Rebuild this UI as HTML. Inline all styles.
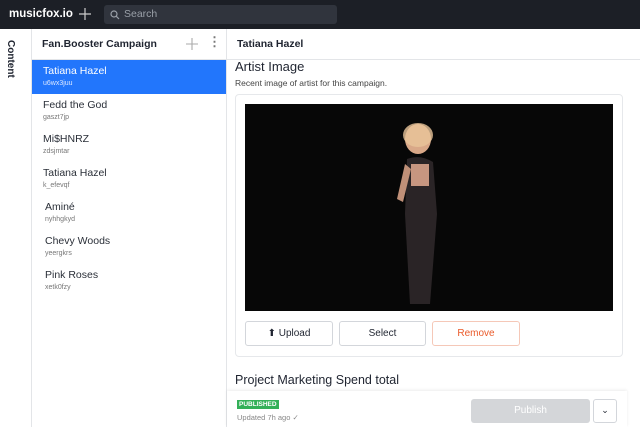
<!DOCTYPE html><html><head><style>
*{box-sizing:border-box;margin:0;padding:0}
body{width:640px;height:427px;overflow:hidden;font-family:"Liberation Sans",sans-serif;background:#fff;position:relative;color:#1f2430}
.top{position:absolute;left:0;top:0;width:640px;height:29px;background:#1c1f26}
.logo{position:absolute;left:9px;top:8px;color:#fff;font-size:11.5px;font-weight:bold}
.search{position:absolute;left:104px;top:5px;width:233px;height:19px;background:#30343d;border-radius:3px;color:#9aa0a8;font-size:10.5px;padding:3px 0 0 20px}
.side{position:absolute;left:0;top:29px;width:32px;height:398px;border-right:1px solid #e3e5e8;background:#fff}
.side span{position:absolute;left:5px;top:11px;writing-mode:vertical-rl;font-size:10px;font-weight:bold}
.list{position:absolute;left:32px;top:29px;width:195px;height:398px;border-right:1px solid #e3e5e8}
.lh{height:31px;border-bottom:1px solid #e3e5e8;font-size:10.5px;font-weight:bold;padding:9px 0 0 10px;position:relative}
.it{height:34px;padding:5px 0 0 11px;font-size:10.5px;color:#2a2f38}
.it small{display:block;font-size:7px;color:#777;margin-top:3px}
.it.sel{background:#2276fc;color:#fff}.it.sel small{color:#dbe7ff}
.main{position:absolute;left:227px;top:29px;width:413px;height:398px}
.mh{height:31px;border-bottom:1px solid #e3e5e8;font-size:10.5px;font-weight:bold;padding:9px 0 0 10px}
.btn{position:absolute;top:321px;height:25px;border:1px solid #d3d6db;border-radius:3px;font-size:10px;text-align:center;padding-top:6px;background:#fff}
</style></head><body>
<div class="top"><div class="logo">musicfox.io</div>
<svg style="position:absolute;left:79px;top:8px" width="12" height="12"><path d="M6 0V12M0 6H12" stroke="#ccc" stroke-width="1.2"/></svg>
<div class="search"><svg style="position:absolute;left:6px;top:5px" width="10" height="10" viewBox="0 0 10 10"><circle cx="4" cy="4" r="3" fill="none" stroke="#9aa0a8" stroke-width="1.2"/><path d="M6.3 6.3L9 9" stroke="#9aa0a8" stroke-width="1.2"/></svg>Search</div></div>
<div class="side"><span>Content</span></div>
<div class="list"><div class="lh">Fan.Booster Campaign<svg style="position:absolute;left:154px;top:9px" width="12" height="12"><path d="M6 0V12M0 6H12" stroke="#aaa" stroke-width="1.1"/></svg><span style="position:absolute;left:176px;top:5px;font-size:13px;color:#777">⋮</span></div>
<div class="it sel">Tatiana Hazel<small>u6wx3juu</small></div>
<div class="it">Fedd the God<small>gaszt7jp</small></div>
<div class="it">Mi$HNRZ<small>zdsjmtar</small></div>
<div class="it">Tatiana Hazel<small>k_efevqf</small></div>
<div class="it" style="padding-left:13px">Aminé<small>nyhhgkyd</small></div>
<div class="it" style="padding-left:13px">Chevy Woods<small>yeergkrs</small></div>
<div class="it" style="padding-left:13px">Pink Roses<small>xetk0fzy</small></div>
</div>
<div class="main"><div class="mh">Tatiana Hazel</div></div>
<div style="position:absolute;left:235px;top:59px;font-size:13px">Artist Image</div>
<div style="position:absolute;left:235px;top:78px;font-size:8.5px;color:#444">Recent image of artist for this campaign.</div>
<div style="position:absolute;left:235px;top:94px;width:388px;height:263px;border:1px solid #e6e8eb;border-radius:4px"></div>
<div style="position:absolute;left:245px;top:104px;width:368px;height:207px;background:#070707;overflow:hidden">
<svg width="368" height="207"><ellipse cx="173" cy="35" rx="13" ry="15" fill="#d9a888"/><ellipse cx="173" cy="31" rx="15" ry="12" fill="#e8c49a" opacity=".8"/><path d="M162 55 Q175 50 188 58 L192 110 L185 200 L165 200 L160 110Z" fill="#2a2426"/><rect x="166" y="60" width="18" height="22" fill="#c79680"/><path d="M160 60 L152 95 L158 98 L166 65Z" fill="#c09078"/></svg></div>
<div class="btn" style="left:245px;width:88px">⬆ Upload</div>
<div class="btn" style="left:339px;width:87px">Select</div>
<div class="btn" style="left:432px;width:88px;color:#ea5a2a;border-color:#f5c8b8">Remove</div>
<div style="position:absolute;left:235px;top:373px;font-size:12.5px">Project Marketing Spend total</div>
<div style="position:absolute;left:227px;top:391px;width:400px;height:36px;background:#fff;box-shadow:0 -1px 3px rgba(0,0,0,.08)"></div>
<div style="position:absolute;left:237px;top:400px;background:#34b058;color:#fff;font-size:6.5px;font-weight:bold;padding:1px 2px">PUBLISHED</div>
<div style="position:absolute;left:237px;top:413px;font-size:7.5px;color:#888">Updated 7h ago ✓</div>
<div style="position:absolute;left:471px;top:399px;width:119px;height:24px;background:#d4d6d9;border-radius:3px;color:#fff;font-size:10px;text-align:center;padding-top:6px">Publish</div>
<div style="position:absolute;left:593px;top:399px;width:24px;height:24px;border:1px solid #d3d6db;border-radius:3px;font-size:9px;text-align:center;padding-top:5px">⌄</div>
</body></html>
